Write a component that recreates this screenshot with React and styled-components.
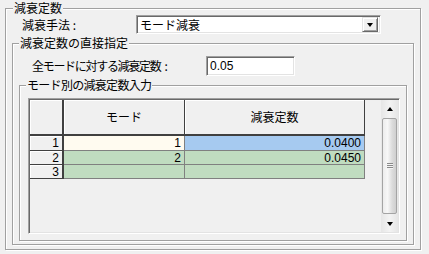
import React from 'react';
import styled, { createGlobalStyle } from 'styled-components';

const GlobalStyle = createGlobalStyle`
  html, body {
    margin: 0;
    padding: 0;
    background: #f0f0f0;
  }
  body {
    font-family: "Noto Sans CJK JP", "Noto Sans", sans-serif;
    font-size: 12px;
    color: #000;
  }
`;

const Window = styled.div`
  width: 429px;
  height: 254px;
  box-sizing: border-box;
  padding: 1px 0 0 5px;
  background: #f0f0f0;
  overflow: hidden;
`;

const GroupBox = styled.fieldset`
  box-sizing: border-box;
  width: ${({ $w }) => $w}px;
  height: ${({ $h }) => $h}px;
  margin: ${({ $mt }) => $mt || 0}px 0 0 0;
  padding: 0 6px 0 6px;
  min-width: 0;
  border: 1px solid #a0a0a0;
  box-shadow: inset 1px 1px 0 #fff, 1px 1px 0 #fff;
`;

const Legend = styled.legend`
  margin-left: ${({ $offset }) => $offset || 0}px;
  padding: 0 1px;
  height: 14px;
  line-height: 14px;
  letter-spacing: ${({ $ls }) => $ls || 0}px;
  background: #f0f0f0;
`;

const Row = styled.div`
  display: flex;
  align-items: center;
  height: ${({ $h }) => $h}px;
  margin-top: ${({ $mt }) => $mt || 0}px;
`;

const Label = styled.span`
  display: block;
  box-sizing: border-box;
  width: ${({ $w }) => $w}px;
  padding-left: ${({ $pl }) => $pl}px;
  line-height: 14px;
  letter-spacing: ${({ $ls }) => $ls || 0}px;
  white-space: nowrap;
`;

const Colon = styled.span`
  letter-spacing: 0;
  margin-left: 4px;
`;

const Sunken = styled.div`
  box-sizing: border-box;
  display: flex;
  align-items: center;
  width: ${({ $w }) => $w}px;
  height: 100%;
  background: #fff;
  border-top: 1px solid #a0a0a0;
  border-left: 1px solid #a0a0a0;
  border-right: 1px solid #fff;
  border-bottom: 1px solid #fff;
  box-shadow: inset 1px 1px 0 #696969, inset -1px -1px 0 #e3e3e3;
  padding-left: 3px;
  line-height: 14px;
`;

const NumText = styled.span`
  font-family: "Liberation Sans", Arial, sans-serif;
  font-size: 12px;
`;

const ComboText = styled.span`
  flex: 1;
`;

const DropButton = styled.div`
  box-sizing: border-box;
  width: 16px;
  height: 15px;
  margin-right: 2px;
  display: flex;
  align-items: center;
  justify-content: center;
  background: #f0f0f0;
  border-top: 1px solid #e3e3e3;
  border-left: 1px solid #e3e3e3;
  border-right: 1px solid #696969;
  border-bottom: 1px solid #696969;
  box-shadow: inset 1px 1px 0 #fff, inset -1px -1px 0 #a0a0a0;
`;

const Arrow = styled.span`
  width: 0;
  height: 0;
  border-left: 3.5px solid transparent;
  border-right: 3.5px solid transparent;
  ${({ $up }) =>
    $up ? 'border-bottom: 4px solid #000;' : 'border-top: 4px solid #000;'}
`;

const GridFrame = styled.div`
  box-sizing: border-box;
  display: flex;
  width: 372px;
  height: 136px;
  margin: 6px 0 0 2px;
  background: #f0f0f0;
  border-top: 1px solid #a0a0a0;
  border-left: 1px solid #a0a0a0;
  border-right: 1px solid #fff;
  border-bottom: 1px solid #fff;
  box-shadow: inset 1px 1px 0 #696969, inset -1px -1px 0 #e3e3e3;
  padding: 1px;
`;

const Table = styled.table`
  border-collapse: separate;
  border-spacing: 0;
  align-self: flex-start;
  table-layout: fixed;
  margin-right: auto;
  line-height: 12px;
`;

const HeadCell = styled.th`
  box-sizing: border-box;
  width: ${({ $w }) => $w}px;
  height: 36px;
  padding: 0;
  font-weight: normal;
  text-align: center;
  background: #f0f0f0;
  border-right: ${({ $corner }) => ($corner ? 2 : 1)}px solid #404040;
  border-bottom: 2px solid #404040;
  box-shadow: inset 1px 1px 0 #fff;
`;

const RowHead = styled.td`
  box-sizing: border-box;
  height: ${({ $h }) => $h}px;
  padding: 0 3px 0 0;
  text-align: right;
  font-family: "Liberation Sans", Arial, sans-serif;
  background: #f0f0f0;
  border-right: 2px solid #404040;
  border-bottom: 1px solid #404040;
  box-shadow: inset 1px 1px 0 #fff;
`;

const Cell = styled.td`
  box-sizing: border-box;
  height: ${({ $h }) => $h}px;
  padding: 0 3px 0 0;
  text-align: right;
  font-family: "Liberation Sans", Arial, sans-serif;
  background: ${({ $bg }) => $bg};
  border-right: 1px solid #808080;
  border-bottom: 1px solid #808080;
`;

const ScrollBar = styled.div`
  display: flex;
  flex-direction: column;
  width: 17px;
  height: 100%;
  background: linear-gradient(to right, #e6e6e6, #f3f3f3 50%, #e6e6e6);
`;

const ScrollButton = styled.div`
  height: 17px;
  display: flex;
  align-items: center;
  justify-content: center;
  flex: none;
`;

const Track = styled.div`
  flex: 1;
  display: flex;
  padding: 1px 0;
`;

const Thumb = styled.div`
  flex: 1;
  margin: 0 1px;
  display: flex;
  align-items: center;
  justify-content: center;
  border: 1px solid #a4a4a4;
  border-radius: 2px;
  background: linear-gradient(to right, #ececec, #f7f7f7 35%, #dcdcdc 70%, #cfcfcf);
`;

const Grip = styled.div`
  width: 6px;
  height: 6px;
  background: repeating-linear-gradient(
    to bottom,
    #8a8a8a 0,
    #8a8a8a 1px,
    #f4f4f4 1px,
    #f4f4f4 2px
  );
`;

const rows = [
  { id: 1, mode: '1', value: '0.0400', modeBg: '#fffbf0', valueBg: '#a6caf0', h: 15 },
  { id: 2, mode: '2', value: '0.0450', modeBg: '#c0dcc0', valueBg: '#c0dcc0', h: 14 },
  { id: 3, mode: '', value: '', modeBg: '#c0dcc0', valueBg: '#c0dcc0', h: 14 },
];

function App() {
  return (
    <Window>
      <GlobalStyle />
      <GroupBox $w={416} $h={249}>
        <Legend $offset={1}>減衰定数</Legend>
        <Row $h={19}>
          <Label $w={124} $pl={10}>減衰手法 :</Label>
          <Sunken $w={245}>
            <ComboText>モード減衰</ComboText>
            <DropButton>
              <Arrow />
            </DropButton>
          </Sunken>
        </Row>
        <GroupBox $w={402} $h={209} $mt={2}>
          <Legend>減衰定数の直接指定</Legend>
          <Row $h={20} $mt={6}>
            <Label $w={187} $pl={13} $ls={-1.3}>
              全モードに対する減衰定数<Colon>:</Colon>
            </Label>
            <Sunken $w={89}>
              <NumText>0.05</NumText>
            </Sunken>
          </Row>
          <GroupBox $w={388} $h={163} $mt={2}>
            <Legend $ls={-0.7}>モード別の減衰定数入力</Legend>
            <GridFrame>
              <Table>
                <thead>
                  <tr>
                    <HeadCell $w={34} $corner />
                    <HeadCell $w={121}>モード</HeadCell>
                    <HeadCell $w={180}>減衰定数</HeadCell>
                  </tr>
                </thead>
                <tbody>
                  {rows.map((r) => (
                    <tr key={r.id}>
                      <RowHead $h={r.h}>{r.id}</RowHead>
                      <Cell $h={r.h} $bg={r.modeBg}>{r.mode}</Cell>
                      <Cell $h={r.h} $bg={r.valueBg}>{r.value}</Cell>
                    </tr>
                  ))}
                </tbody>
              </Table>
              <ScrollBar>
                <ScrollButton>
                  <Arrow $up />
                </ScrollButton>
                <Track>
                  <Thumb>
                    <Grip />
                  </Thumb>
                </Track>
                <ScrollButton>
                  <Arrow />
                </ScrollButton>
              </ScrollBar>
            </GridFrame>
          </GroupBox>
        </GroupBox>
      </GroupBox>
    </Window>
  );
}

export default App;
